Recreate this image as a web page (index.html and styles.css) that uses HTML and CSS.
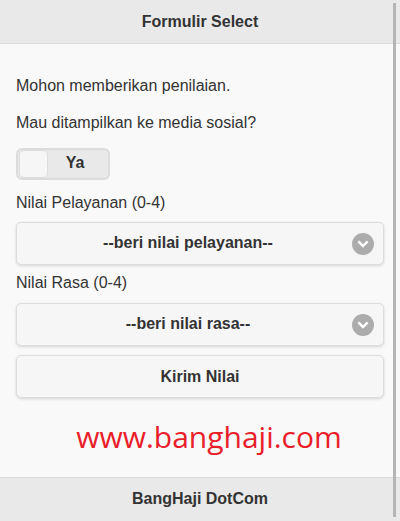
FILE: index.html
```html
<!DOCTYPE html>
<html lang="en">
<head>
    <meta charset="UTF-8">
    <meta name="viewport" content="width=device-width, initial-scale=1.0">
    <title>Formulir Select</title>
    <link rel="stylesheet" href="styles.css">
</head>
<body>
    <div class="page">
        <div class="header">
            <h1>Formulir Select</h1>
        </div>

        <div class="content">
            <form id="rating-form">
                <p>Mohon memberikan penilaian.</p>
                <p>Mau ditampilkan ke media sosial?</p>

                <div class="flipswitch">
                    <span class="flip-handle"></span>
                    <span class="flip-label">Ya</span>
                </div>

                <label for="pelayanan" class="first">Nilai Pelayanan (0-4)</label>
                <div class="select-btn">
                    <span>--beri nilai pelayanan--</span>
                    <span class="select-icon">
                        <svg width="12" height="12" viewBox="0 0 12 12"><path d="M2.2 4.2 L6 8 L9.8 4.2" fill="none" stroke="#fff" stroke-width="2.4" stroke-linecap="square"/></svg>
                    </span>
                </div>

                <label for="rasa">Nilai Rasa (0-4)</label>
                <div class="select-btn">
                    <span>--beri nilai rasa--</span>
                    <span class="select-icon">
                        <svg width="12" height="12" viewBox="0 0 12 12"><path d="M2.2 4.2 L6 8 L9.8 4.2" fill="none" stroke="#fff" stroke-width="2.4" stroke-linecap="square"/></svg>
                    </span>
                </div>

                <button type="submit" class="submit-btn">Kirim Nilai</button>
            </form>

            <div class="watermark">www.banghaji.com</div>
        </div>

        <div class="footer">
            <h4>BangHaji DotCom</h4>
        </div>

        <div class="scrollbar"></div>
    </div>
</body>
</html>
```

FILE: styles.css
```css
body {
    margin: 0;
    font-family: "Liberation Sans", Arial, sans-serif;
    font-size: 16px;
    line-height: 1.3;
    color: #333;
    background: #f9f9f9;
}
.page {
    position: relative;
    height: 521px;
    display: flex;
    flex-direction: column;
}
.header, .footer {
    background: #e9e9e9;
    border-color: #ddd;
    border-style: solid;
    border-width: 0;
    text-align: center;
}
.header {
    border-bottom-width: 1px;
}
.footer {
    border-top-width: 1px;
}
.header h1, .footer h4 {
    margin: 0;
    padding: 11px 0;
    font-size: 16px;
    font-weight: bold;
    line-height: 21px;
}
.footer h4 {
    padding: 10px 0 12px;
}
.content {
    flex: 1;
    padding: 16px;
}
p {
    margin: 16px 0 0;
}
.flipswitch {
    margin-top: 14px;
    width: 90px;
    height: 28px;
    border: 2px solid #dcdcdc;
    border-radius: 6px;
    background: #e9e9e9;
    display: flex;
    align-items: center;
    box-sizing: content-box;
}
.flip-handle {
    width: 27px;
    height: 26px;
    margin-left: 1px;
    background: #f6f6f6;
    border: 1px solid #ddd;
    border-radius: 5px;
}
.flip-label {
    flex: 1;
    padding-right: 6px;
    text-align: center;
    font-weight: bold;
}
label {
    display: block;
    margin: 8px 0 9px;
}
label.first {
    margin-top: 13px;
}
.select-btn {
    position: relative;
    height: 41px;
    padding: 0 40px 0 16px;
    border: 1px solid #ddd;
    border-radius: 5px;
    background: #f6f6f6;
    box-shadow: 0 1px 3px rgba(0,0,0,0.15);
    display: flex;
    align-items: center;
    justify-content: center;
    font-weight: bold;
}
.select-icon {
    position: absolute;
    right: 9px;
    top: 10px;
    width: 22px;
    height: 22px;
    border-radius: 50%;
    background: rgba(0,0,0,0.3);
    display: flex;
    align-items: center;
    justify-content: center;
}
.submit-btn {
    display: block;
    width: 100%;
    margin-top: 9px;
    height: 43px;
    border: 1px solid #ddd;
    border-radius: 5px;
    background: #f6f6f6;
    box-shadow: 0 1px 3px rgba(0,0,0,0.15);
    font-family: inherit;
    font-size: 16px;
    font-weight: bold;
    color: #333;
}
.watermark {
    margin-top: 19px;
    padding-left: 18px;
    text-align: center;
    font-family: "Open Sans", sans-serif;
    font-size: 30px;
    line-height: 40px;
    color: #e8202a;
}
.scrollbar {
    position: absolute;
    right: 4px;
    top: 3px;
    bottom: 4px;
    width: 3px;
    background: #b5b5b5;
}
```
